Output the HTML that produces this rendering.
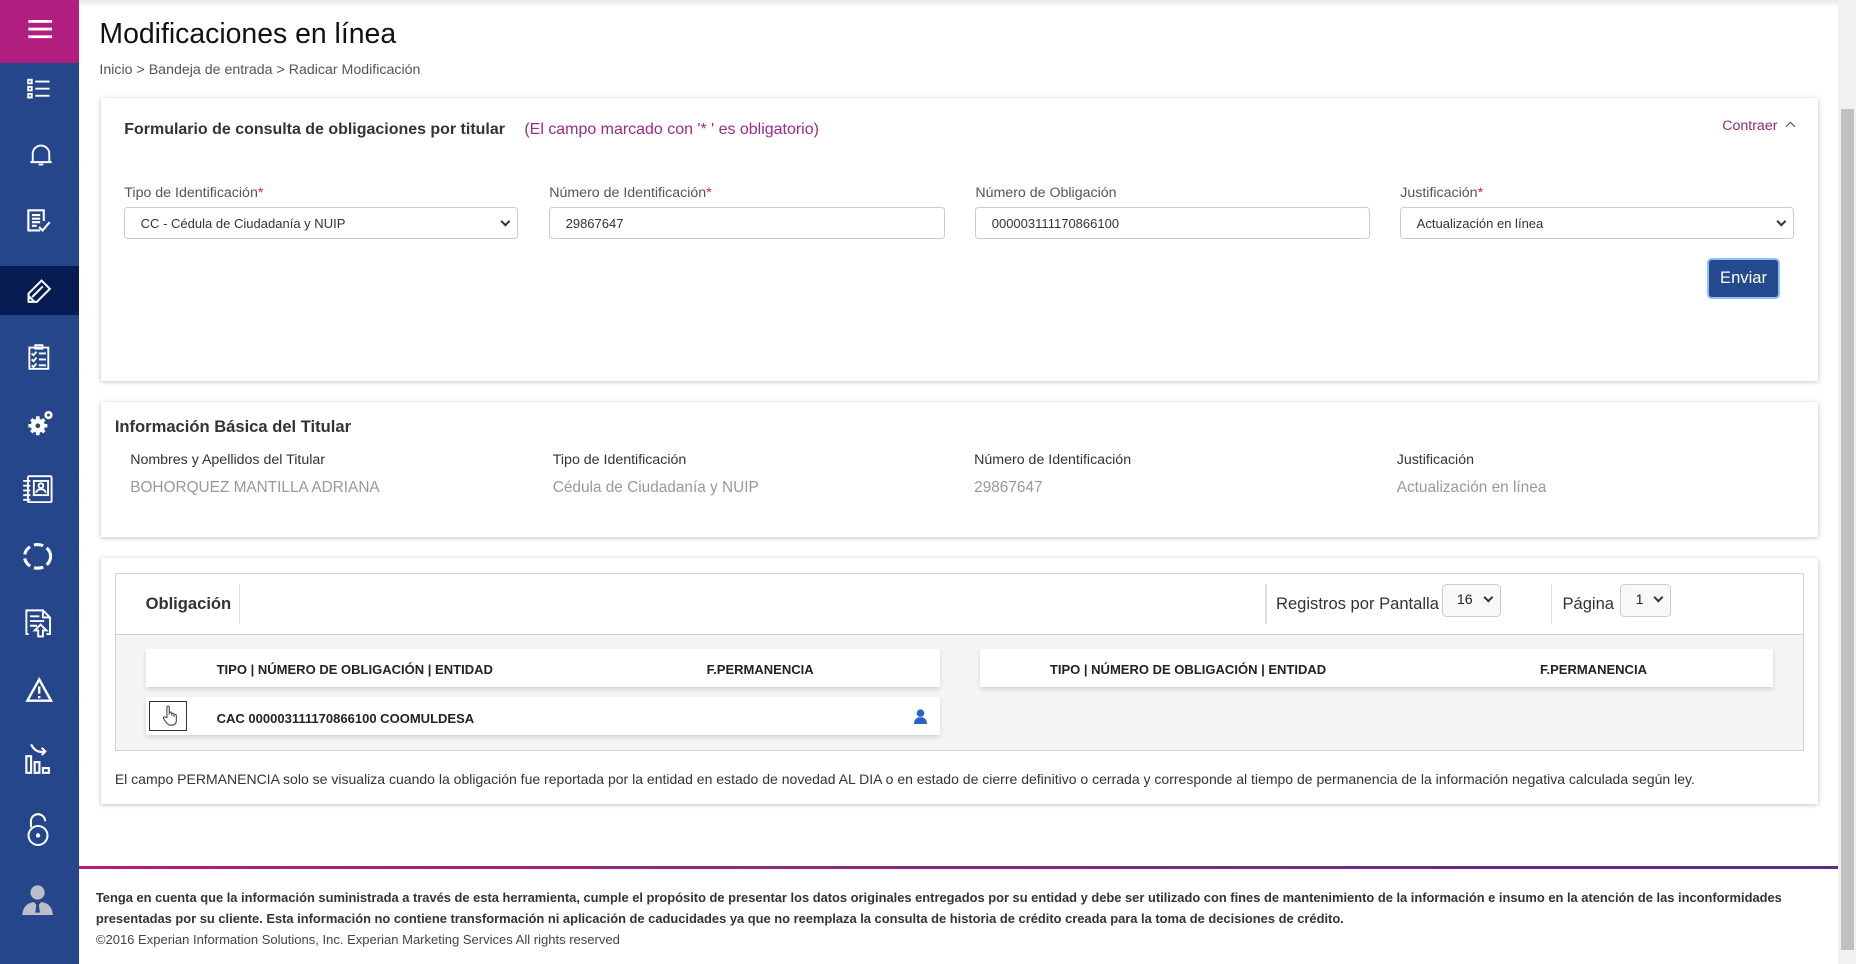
<!DOCTYPE html>
<html><head><meta charset="utf-8">
<style>
html,body{margin:0;padding:0;width:1856px;height:964px;overflow:hidden;background:#fff;}
#w{position:relative;width:1568px;height:814px;zoom:1.18367;font-family:"Liberation Sans",Arial,sans-serif;color:#222;background:#fff;overflow:hidden;}
.a{position:absolute;white-space:nowrap;}
.t{position:absolute;white-space:nowrap;line-height:20px;margin-top:1px;}
#sb{position:absolute;left:0;top:0;width:67px;height:814px;background:#26468b;}
.card{position:absolute;background:#fff;box-shadow:0 1px 4px rgba(0,0,0,.28);}
.lbl{font-size:12px;color:#555;}
.req{color:#e0203a;}
.inp{position:absolute;height:27px;border:1px solid #ccc;border-radius:3px;background:#fff;font-size:11px;color:#333;line-height:27px;padding-left:13px;box-sizing:border-box;}
.chev{position:absolute;right:6px;top:9px;width:6px;height:6px;border-right:2px solid #333;border-bottom:2px solid #333;transform:rotate(45deg);}
.th{font-size:11px;font-weight:bold;color:#222;}
</style></head><body><div id="w">
<div class="a" style="left:67px;top:0;width:1486px;height:6px;background:linear-gradient(#e6e6e6,#fff);"></div>
<div id="sb">
<div class="a" style="left:0;top:0;width:67px;height:53px;background:#b01e7f;"></div>
<div class="a" style="left:0;top:225px;width:67px;height:41px;background:#061c52;"></div>
<svg class="a" style="left:22px;top:16px" width="24" height="17"><g stroke="#fff" stroke-width="2.4"><line x1="2" y1="2" x2="22" y2="2"/><line x1="2" y1="8.5" x2="22" y2="8.5"/><line x1="2" y1="15" x2="22" y2="15"/></g></svg>
<svg class="a" style="left:23px;top:66px" width="20" height="18" fill="none" stroke="#fff" stroke-width="1.6"><rect x="1" y="1.5" width="3" height="3"/><rect x="1" y="7.5" width="3" height="3"/><rect x="1" y="13.5" width="3" height="3"/><line x1="7" y1="3" x2="19" y2="3"/><line x1="7" y1="9" x2="19" y2="9"/><line x1="7" y1="15" x2="19" y2="15"/></svg>
<svg class="a" style="left:24px;top:120px" width="22" height="22" fill="none" stroke="#fff" stroke-width="1.6"><path d="M4 17 V10 a7 7 0 0 1 14 0 V17 Z M2 17 H20"/><path d="M9 19 h4" /></svg>
<svg class="a" style="left:22px;top:176px" width="22" height="22" fill="none" stroke="#fff" stroke-width="1.8"><path d="M12 19 H2 V2 H15 V11"/><path d="M5 6h7M5 9h7M5 12h7M5 15h4"/><path d="M11 16 l3 3 l6 -7"/></svg>
<svg class="a" style="left:21px;top:234px" width="24" height="22" fill="none" stroke="#fff" stroke-width="1.7"><path d="M3 14 L14 3 L21 10 L10 21 H3 Z M6 17 l9 -9 M3 16 l5 5"/></svg>
<svg class="a" style="left:23px;top:291px" width="20" height="22" fill="none" stroke="#fff" stroke-width="1.6"><path d="M2 3 H18 V21 H2 Z M7 1 h6 v3 h-6z"/><path d="M4 8 l1.5 1.5 l2.5 -3 M10 8h6 M4 13 l1.5 1.5 l2.5 -3 M10 13h6 M4 18 l1.5 1.5 l2.5 -3 M10 18h6"/></svg>
<svg class="a" style="left:22px;top:345px" width="24" height="24" fill="#fff"><circle cx="10" cy="15" r="6"/><circle cx="19" cy="6" r="3.5"/><circle cx="19" cy="6" r="1.2" fill="#26468b"/><g stroke="#fff" stroke-width="3"><line x1="10" y1="7" x2="10" y2="23"/><line x1="2" y1="15" x2="18" y2="15"/><line x1="4.5" y1="9.5" x2="15.5" y2="20.5"/><line x1="15.5" y1="9.5" x2="4.5" y2="20.5"/></g><circle cx="10" cy="15" r="2" fill="#26468b"/></svg>
<svg class="a" style="left:19px;top:401px" width="26" height="24" fill="none" stroke="#fff" stroke-width="1.6"><rect x="5" y="1" width="20" height="22" rx="1"/><path d="M1 5h6M1 9h6M1 13h6M1 17h6M1 21h6"/><rect x="10" y="5" width="12" height="12" /><circle cx="16" cy="9" r="2"/><path d="M12 15 a4 3 0 0 1 8 0"/></svg>
<svg class="a" style="left:18px;top:457px" width="28" height="26" fill="none" stroke="#fff" stroke-width="2.6" stroke-dasharray="8 3.5"><ellipse cx="14" cy="13" rx="11" ry="10"/></svg>
<svg class="a" style="left:20px;top:514px" width="24" height="26" fill="none" stroke="#fff" stroke-width="1.6"><path d="M4 22 H2 V2 H16 L22 8 V22 H19 M16 2 V8 H22"/><path d="M5 7h8M5 11h12M5 15h6"/><path d="M12 24 V19 H9 L14 14 L19 19 H16 V24 Z"/></svg>
<svg class="a" style="left:21px;top:572px" width="24" height="22" fill="none" stroke="#fff" stroke-width="2"><path d="M12 2 L22 20 H2 Z"/><path d="M12 8 v6 M12 16 v2"/></svg>
<svg class="a" style="left:20px;top:627px" width="24" height="28" fill="none" stroke="#fff" stroke-width="1.8"><path d="M2 12 H6 V26 H2 Z M9 17 H13 V26 H9 Z M16 22 H21 V26 H16 Z"/><path d="M6 2 Q10 10 18 8 M15 5 l3 3 l-3 3"/></svg>
<svg class="a" style="left:21px;top:687px" width="22" height="28" fill="none" stroke="#fff" stroke-width="1.7"><path d="M5 12 V7 a6 6 0 0 1 12 0"/><circle cx="11" cy="19" r="8"/><circle cx="11" cy="19" r="1" fill="#fff"/></svg>
<svg class="a" style="left:18px;top:746px" width="28" height="28" fill="#b9bec9"><circle cx="14" cy="8" r="6"/><path d="M1 27 Q2 17 11 16 L14 20 L17 16 Q26 17 27 27 Z"/><path d="M13 18 h2 l1 7 h-4z" fill="#26468b"/></svg>
</div>
<div class="a" style="left:1553px;top:0;width:15px;height:814px;background:#f1f1f1;"></div>
<div class="a" style="left:1555px;top:92px;width:11px;height:711px;background:#c1c1c1;"></div>
<div class="t" style="left:84px;top:14px;font-size:24px;line-height:28px;color:#111;">Modificaciones en línea</div>
<div class="t" style="left:84px;top:49px;font-size:12px;color:#555;">Inicio &gt; Bandeja de entrada &gt; Radicar Modificación</div>
<div class="card" style="left:85px;top:83px;width:1451px;height:239px;"></div>
<div class="t" style="left:105px;top:99px;font-size:13.5px;font-weight:bold;color:#333;">Formulario de consulta de obligaciones por titular</div>
<div class="t" style="left:443px;top:99px;font-size:13.5px;color:#a0288a;">(El campo marcado con '* ' es obligatorio)</div>
<div class="t" style="left:1455px;top:96px;font-size:12px;color:#8e2a7e;">Contraer</div>
<div class="a" style="left:1510px;top:104px;width:5px;height:5px;border-left:1.6px solid #444;border-top:1.6px solid #444;transform:rotate(45deg);"></div>
<div class="t lbl" style="left:105px;top:153px;">Tipo de Identificación<span class="req">*</span></div>
<div class="t lbl" style="left:464px;top:153px;">Número de Identificación<span class="req">*</span></div>
<div class="t lbl" style="left:824px;top:153px;">Número de Obligación</div>
<div class="t lbl" style="left:1183px;top:153px;">Justificación<span class="req">*</span></div>
<div class="inp" style="left:105px;top:175px;width:333px;">CC - Cédula de Ciudadanía y NUIP<div class="chev" style="right:7px;top:8px;width:4px;height:4px;"></div></div>
<div class="inp" style="left:464px;top:175px;width:334px;">29867647</div>
<div class="inp" style="left:824px;top:175px;width:333px;">000003111170866100</div>
<div class="inp" style="left:1183px;top:175px;width:333px;">Actualización en línea<div class="chev" style="right:7px;top:8px;width:4px;height:4px;"></div></div>
<div class="a" style="left:1442px;top:218px;width:62px;height:35px;background:#234a8c;border:2px solid #8fc0f5;border-radius:4px;box-sizing:border-box;color:#fff;font-size:14px;line-height:31px;text-align:center;">Enviar</div>
<div class="card" style="left:85px;top:340px;width:1451px;height:114px;"></div>
<div class="t" style="left:97px;top:350px;font-size:14px;font-weight:bold;color:#333;">Información Básica del Titular</div>
<div class="t" style="left:110px;top:378px;font-size:12px;color:#333;">Nombres y Apellidos del Titular</div>
<div class="t" style="left:467px;top:378px;font-size:12px;color:#333;">Tipo de Identificación</div>
<div class="t" style="left:823px;top:378px;font-size:12px;color:#333;">Número de Identificación</div>
<div class="t" style="left:1180px;top:378px;font-size:12px;color:#333;">Justificación</div>
<div class="t" style="left:110px;top:401px;font-size:13px;color:#999;">BOHORQUEZ MANTILLA ADRIANA</div>
<div class="t" style="left:467px;top:401px;font-size:13px;color:#999;">Cédula de Ciudadanía y NUIP</div>
<div class="t" style="left:823px;top:401px;font-size:13px;color:#999;">29867647</div>
<div class="t" style="left:1180px;top:401px;font-size:13px;color:#999;">Actualización en línea</div>
<div class="card" style="left:85px;top:471px;width:1451px;height:208px;"></div>
<div class="a" style="left:97px;top:484px;width:1425px;height:149px;border:1px solid #d0d0d0;background:#f5f5f5;"></div>
<div class="a" style="left:98px;top:485px;width:1425px;height:51px;background:#fff;border-bottom:1px solid #d0d0d0;"></div>
<div class="t" style="left:123px;top:499px;font-size:14px;font-weight:bold;color:#333;">Obligación</div>
<div class="a" style="left:202px;top:493px;width:1px;height:34px;background:#ddd;"></div>
<div class="a" style="left:1069px;top:493px;width:1px;height:34px;background:#ddd;"></div>
<div class="t" style="left:1078px;top:499px;font-size:14px;color:#333;">Registros por Pantalla</div>
<div class="a" style="left:1218px;top:493px;width:50px;height:28px;border:1px solid #ccc;border-radius:4px;box-sizing:border-box;background:#f8f8f8;font-size:12px;line-height:26px;padding-left:12px;">16<div class="chev" style="right:7px;top:8px;width:4px;height:4px;"></div></div>
<div class="a" style="left:1310px;top:493px;width:1px;height:34px;background:#ddd;"></div>
<div class="t" style="left:1320px;top:499px;font-size:14px;color:#333;">Página</div>
<div class="a" style="left:1369px;top:493px;width:43px;height:28px;border:1px solid #ccc;border-radius:4px;box-sizing:border-box;background:#f8f8f8;font-size:12px;line-height:26px;padding-left:12px;">1<div class="chev" style="right:7px;top:8px;width:4px;height:4px;"></div></div>
<div class="a" style="left:123px;top:548px;width:671px;height:32px;background:#fff;box-shadow:0 2px 4px rgba(0,0,0,.15);"></div>
<div class="t th" style="left:183px;top:555px;">TIPO | NÚMERO DE OBLIGACIÓN | ENTIDAD</div>
<div class="t th" style="left:597px;top:555px;">F.PERMANENCIA</div>
<div class="a" style="left:828px;top:548px;width:670px;height:32px;background:#fff;box-shadow:0 2px 4px rgba(0,0,0,.15);"></div>
<div class="t th" style="left:887px;top:555px;">TIPO | NÚMERO DE OBLIGACIÓN | ENTIDAD</div>
<div class="t th" style="left:1301px;top:555px;">F.PERMANENCIA</div>
<div class="a" style="left:123px;top:589px;width:671px;height:32px;background:#fff;box-shadow:0 2px 4px rgba(0,0,0,.15);"></div>
<div class="a" style="left:126px;top:592px;width:32px;height:26px;border:1px solid #333;box-sizing:border-box;"></div>
<svg class="a" style="left:136px;top:596px" width="14" height="18" fill="none" stroke="#555" stroke-width="1"><path d="M5 11 V2 a1 1 0 0 1 2 0 V8 M7 7 a1 1 0 0 1 2 0 V9 M9 8 a1 1 0 0 1 2 0 V10 M11 9 a1 1 0 0 1 2 0 V13 Q13 17 9 17 H7 Q4 15 2 11 Q2 9 5 11"/></svg>
<div class="t th" style="left:183px;top:596px;">CAC 000003111170866100 COOMULDESA</div>
<svg class="a" style="left:772px;top:599px" width="11" height="13" fill="#2a64c8"><circle cx="5.5" cy="3.5" r="3.2"/><path d="M0 13 Q0 7 5.5 7 Q11 7 11 13 Z"/></svg>
<div class="t" style="left:97px;top:648px;font-size:11.85px;color:#333;">El campo PERMANENCIA solo se visualiza cuando la obligación fue reportada por la entidad en estado de novedad AL DIA o en estado de cierre definitivo o cerrada y corresponde al tiempo de permanencia de la información negativa calculada según ley.</div>
<div class="a" style="left:67px;top:732px;width:1486px;height:2px;background:linear-gradient(90deg,#b01e7f,#8a2a7e 40%,#5a2d8a);"></div>
<div class="t" style="left:81px;top:748px;font-size:10.9px;line-height:18px;font-weight:bold;color:#333;">Tenga en cuenta que la información suministrada a través de esta herramienta, cumple el propósito de presentar los datos originales entregados por su entidad y debe ser utilizado con fines de mantenimiento de la información e insumo en la atención de las inconformidades<br>presentadas por su cliente. Esta información no contiene transformación ni aplicación de caducidades ya que no reemplaza la consulta de historia de crédito creada para la toma de decisiones de crédito.</div>
<div class="t" style="left:81px;top:784px;font-size:11px;line-height:18px;color:#444;">©2016 Experian Information Solutions, Inc. Experian Marketing Services All rights reserved</div>
</div></body></html>
